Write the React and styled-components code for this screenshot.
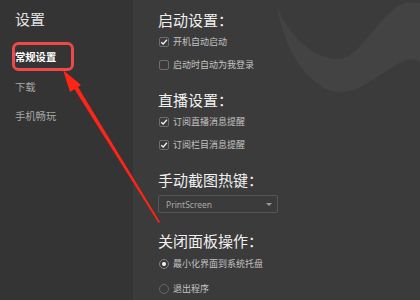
import React from "react";
import styled, { createGlobalStyle } from "styled-components";

const Global = createGlobalStyle`
  html, body { margin: 0; padding: 0; background: #3b3b3b; }
  body { font-family: "Noto Sans CJK SC", "Noto Sans", sans-serif; }
`;

const Window = styled.div`
  position: relative;
  width: 420px;
  height: 300px;
  display: flex;
  overflow: hidden;
`;

const Sidebar = styled.aside`
  width: 133px;
  flex-shrink: 0;
  background: #343434;
  padding: 9px 0 0 15px;
  box-sizing: border-box;
  display: flex;
  flex-direction: column;
`;

const SideTitle = styled.div`
  font-size: 15px;
  line-height: 20px;
  color: #e2e2e2;
  margin-bottom: 13px;
`;

const NavItem = styled.div`
  height: 29.5px;
  line-height: 29.5px;
  font-size: 10.3px;
  color: ${(p) => (p.$active ? "#ffffff" : "#a8a8a8")};
  font-weight: ${(p) => (p.$active ? 700 : 400)};
`;

const Main = styled.main`
  position: relative;
  flex: 1;
  background: #3b3b3b;
  padding: 10px 0 0 25px;
  box-sizing: border-box;
  display: flex;
  flex-direction: column;
`;

const Wave = styled.svg`
  position: absolute;
  left: 0;
  top: 0;
  pointer-events: none;
`;

const Section = styled.section`
  position: relative;
  display: flex;
  flex-direction: column;
  margin-bottom: ${(p) => p.$after}px;
`;

const Heading = styled.h2`
  margin: 0;
  font-size: 15px;
  font-weight: 400;
  line-height: 20px;
  color: #f0f0f0;
`;

const Option = styled.label`
  display: flex;
  align-items: center;
  height: ${(p) => p.$h || 23}px;
  font-size: 9px;
  color: #c4c4c4;
  gap: 4px;
  padding-left: 1px;
`;

const Box = styled.span`
  width: 8px;
  height: 8px;
  border: 1px solid #6e6e6e;
  border-radius: 2px;
  display: flex;
  align-items: center;
  justify-content: center;
`;

const Radio = styled.span`
  width: 8px;
  height: 8px;
  border: 1px solid ${(p) => (p.$on ? "#808080" : "#666")};
  border-radius: 50%;
  display: flex;
  align-items: center;
  justify-content: center;
  &::after {
    content: "";
    width: 4px;
    height: 4px;
    border-radius: 50%;
    background: #f4f4f4;
    display: ${(p) => (p.$on ? "block" : "none")};
  }
`;

const Select = styled.div`
  margin-top: 5px;
  width: 120px;
  height: 18px;
  box-sizing: border-box;
  border: 1px solid #555;
  border-radius: 2px;
  display: flex;
  align-items: center;
  justify-content: space-between;
  padding: 0 5px 0 7px;
  font-family: "Noto Sans", "Open Sans", sans-serif;
  font-size: 8.5px;
  color: #a9a9a9;
`;

const Caret = styled.span`
  width: 0;
  height: 0;
  border-left: 3px solid transparent;
  border-right: 3px solid transparent;
  border-top: 3px solid #999;
`;

const Annotation = styled.svg`
  position: absolute;
  left: 0;
  top: 0;
  pointer-events: none;
`;

const Check = () => (
  <Box>
    <svg width="8" height="8" viewBox="0 0 8 8">
      <path d="M1.2 4.2 L3.2 6 L6.9 1.8" fill="none" stroke="#f2f2f2" strokeWidth="1.3" />
    </svg>
  </Box>
);

export default function App() {
  return (
    <>
      <Global />
      <Window>
        <Sidebar>
          <SideTitle>设置</SideTitle>
          <NavItem $active>常规设置</NavItem>
          <NavItem>下载</NavItem>
          <NavItem>手机畅玩</NavItem>
        </Sidebar>
        <Main>
          <Wave width="287" height="110" viewBox="133 0 287 110">
            <path
              d="M277,7 C285,25 305,58 338,59 C360,60 380,10 407,2 L420,3 L420,62 C405,52 385,75 367,83 C350,95 330,95 317,83 C295,68 282,35 277,7 Z"
              fill="#434343"
            />
          </Wave>
          <Section $after={14}>
            <Heading>启动设置：</Heading>
            <Option><Check />开机自动启动</Option>
            <Option><Box />启动时自动为我登录</Option>
          </Section>
          <Section $after={14}>
            <Heading>直播设置：</Heading>
            <Option><Check />订阅直播消息提醒</Option>
            <Option><Check />订阅栏目消息提醒</Option>
          </Section>
          <Section $after={18}>
            <Heading>手动截图热键：</Heading>
            <Select>
              PrintScreen
              <Caret />
            </Select>
          </Section>
          <Section $after={0}>
            <Heading>关闭面板操作：</Heading>
            <Option $h={25}><Radio $on />最小化界面到系统托盘</Option>
            <Option $h={25}><Radio />退出程序</Option>
          </Section>
        </Main>
        <Annotation width="420" height="300" viewBox="0 0 420 300">
          <rect x="13.5" y="43.5" width="59" height="26" rx="5" fill="none" stroke="#ee4848" strokeWidth="3" />
          <polygon points="63,70 81,85 70,92" fill="#ff2418" />
          <polygon points="73.4,87.6 77,85.3 160,222 158.6,223" fill="#ff2418" />
        </Annotation>
      </Window>
    </>
  );
}
